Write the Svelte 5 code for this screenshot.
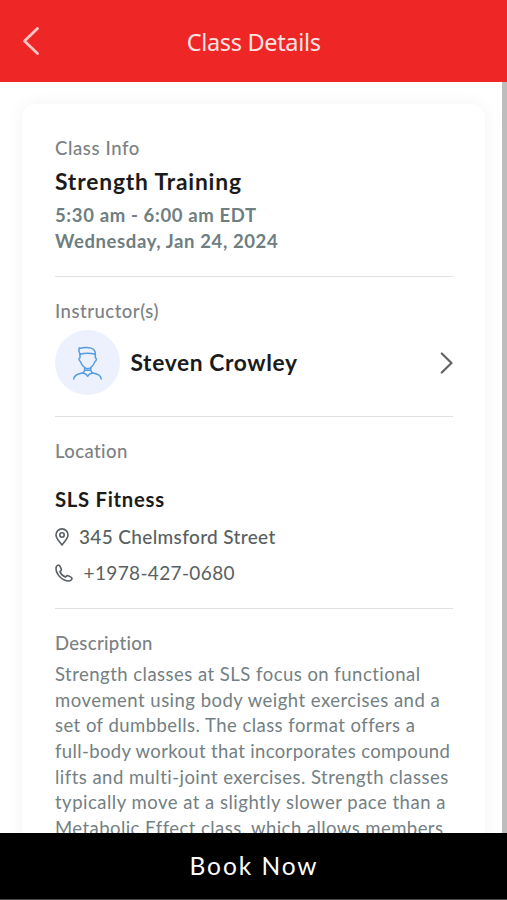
<script>
  const description = [
    { text: 'Strength classes at SLS focus on functional', spacing: 0.472 },
    { text: 'movement using body weight exercises and a', spacing: 0.477 },
    { text: 'set of dumbbells. The class format offers a', spacing: 0.45 },
    { text: 'full-body workout that incorporates compound', spacing: 0.355 },
    { text: 'lifts and multi-joint exercises. Strength classes', spacing: 0.462 },
    { text: 'typically move at a slightly slower pace than a', spacing: 0.492 },
    { text: 'Metabolic Effect class, which allows members', spacing: 0.436 }
  ];
</script>

<div class="screen">
  <header>
    <svg class="back" viewBox="0 0 20 30" fill="none"><path d="M16.500 2.500 3.500 15l13 12.500" /></svg>
    <h1>Class Details</h1>
  </header>

  <main>
    <div class="card">
      <section class="info">
        <div class="label" style="letter-spacing: 0.612px">Class Info</div>
        <h2>Strength Training</h2>
        <div class="when" style="letter-spacing: 0.64px">5:30 am - 6:00 am EDT</div>
        <div class="when" style="letter-spacing: 0.61px">Wednesday, Jan 24, 2024</div>
      </section>

      <section class="instructors">
        <div class="label" style="letter-spacing: 0.501px">Instructor(s)</div>
        <div class="person">
          <span class="avatar">
            <svg viewBox="0 0 44 48" fill="none">
              <path d="M14 15.200c-1.100-2.100-1.500-4.200-.9-6.200 1.300.7 2.200.1 3.600-.2 4.800-.8 13.100-.4 12.600 6.400" />
              <path d="M14 15.200c4.500-1.300 10.500-1.300 15.300 0" />
              <path d="M14 15.200v3.600c-1.500.3-1.200 3.100.4 3.600.9 3.300 4.300 7.300 7.300 7.300s6.400-4 7.300-7.300c1.600-.5 1.900-3.300.3-3.600v-3.600" />
              <path d="M18.600 29v2.300l-1.400 3 2.600.6 1.900 2.300 1.900-2.300 2.600-.6-1.400-3V29M18.600 31.300h6.200" />
              <path d="M17 33.800c-5 1.300-8.800 2-9.300 6.200M26.400 33.800c5 1.300 8.300 2 8.800 6.200" />
            </svg>
          </span>
          <h3>Steven Crowley</h3>
          <svg class="chevron" viewBox="0 0 13 22" fill="none"><path d="m1.800 1.500 9.700 9.500-9.700 9.500" /></svg>
        </div>
      </section>

      <section class="location">
        <div class="label" style="letter-spacing: 0.392px">Location</div>
        <h4>SLS Fitness</h4>
        <div class="row address">
          <svg class="pin" viewBox="0 0 14 18" fill="none">
            <path d="M7 17C4.500 13.800 1 10.200 1 6.900a6 6 0 0 1 12 0C13 10.200 9.500 13.800 7 17Z" />
            <circle cx="7" cy="7" r="2.200" />
          </svg>
          <span>345 Chelmsford Street</span>
        </div>
        <div class="row phone">
          <svg class="tel" viewBox="0 0 18 18" fill="none">
            <path d="M1 4.200C1 2.600 2.400 1.100 3.600 1c.7 0 1 .5 1.300 1.100l1.300 2.700c.3.700.2 1.300-.3 1.800l-1 1c.8 2.400 3.100 4.700 5.500 5.500l1-1c.5-.5 1.100-.6 1.800-.3l2.700 1.300c.6.300 1.100.6 1.100 1.300-.1 1.200-1.600 2.600-3.200 2.600C7.500 17 1 10.500 1 4.200Z" />
          </svg>
          <span>+1978-427-0680</span>
        </div>
      </section>

      <section class="about">
        <div class="label" style="letter-spacing: 0.315px">Description</div>
        <div class="copy">
          {#each description as line}
            <div style="letter-spacing: {line.spacing}px">{line.text}</div>
          {/each}
        </div>
      </section>
    </div>
    <div class="scrollbar"></div>
  </main>

  <button>Book Now</button>
</div>

<style>
  .screen {
    width: 507px;
    height: 900px;
    display: flex;
    flex-direction: column;
    overflow: hidden;
    background: #fff;
    font-family: Lato, 'Liberation Sans', sans-serif;
  }
  h1, h2, h3, h4 { margin: 0; }
  svg { display: block; flex: none; }

  header {
    flex: none;
    box-sizing: border-box;
    height: 81.5px;
    padding: 0 0 0 21px;
    display: flex;
    align-items: center;
    background: #ee2626;
  }
  .back { width: 20px; height: 30px; margin-top: 1px; stroke: #fcc4c4; stroke-width: 2.8; stroke-linecap: round; stroke-linejoin: round; }
  h1 {
    margin: 3px 0 0 145.7px;
    font: 400 23.5px/32px 'Noto Sans', sans-serif;
    letter-spacing: -0.33px;
    color: #ffe3e3;
  }

  main { flex: 1; min-height: 0; display: flex; justify-content: space-between; overflow: hidden; }
  .card {
    box-sizing: border-box;
    width: 463px;
    height: 850px;
    margin: 22.5px 0 0 22px;
    padding: 31px 32.5px 0 33px;
    border-radius: 14px;
    background: #fff;
    box-shadow: 0 0 18px rgba(0, 0, 0, 0.05);
  }
  .scrollbar { width: 5px; background: #bdbdbd; }

  section { box-sizing: border-box; border-bottom: 1.5px solid #e0e1e2; }
  .label { font-size: 18.5px; font-weight: 500; line-height: 26px; color: #7b8184; white-space: nowrap; }

  .info { height: 142px; }
  h2 { margin: 5px 0 7px; font-size: 22.8px; line-height: 30px; letter-spacing: 0.84px; color: #1b1b1b; }
  .when { font-size: 18.5px; font-weight: 700; line-height: 25.67px; color: #6e7e81; white-space: nowrap; }

  .instructors { height: 140px; padding-top: 21px; }
  .person { display: flex; align-items: center; margin-top: 6px; }
  .avatar { width: 65px; height: 65px; display: grid; place-items: center; border-radius: 50%; background: #edf1fd; }
  .avatar svg { width: 44px; height: 48px; stroke: #539ce2; stroke-width: 1.5; stroke-linecap: round; stroke-linejoin: round; }
  h3 { margin: -2px 0 0 10.5px; font-size: 22.8px; line-height: 30px; letter-spacing: 0.62px; color: #1b1b1b; }
  .chevron { width: 13px; height: 22px; margin-left: auto; stroke: #606366; stroke-width: 2.2; stroke-linecap: round; stroke-linejoin: round; }

  .location { height: 192px; padding-top: 21px; }
  h4 { margin-top: 21px; font-size: 20.3px; line-height: 28px; letter-spacing: 0.71px; color: #1b1b1b; }
  .row { display: flex; align-items: center; height: 26px; font-size: 19px; line-height: 26px; color: #595f62; white-space: nowrap; }
  .row svg { stroke: #595f62; stroke-width: 1.6; stroke-linejoin: round; }
  .address { margin-top: 11px; font-weight: 500; letter-spacing: 0.35px; }
  .phone { margin-top: 10px; letter-spacing: 0.359px; }
  .pin { width: 14px; height: 18px; margin-right: 10px; }
  .tel { width: 18px; height: 18px; margin-right: 10.5px; }

  .about { padding-top: 21px; border: 0; }
  .copy { margin-top: 6px; font-size: 18.5px; line-height: 25.67px; color: #738083; white-space: nowrap; }

  button {
    flex: none;
    height: 67.5px;
    padding: 0 0 0 1px;
    border: 0;
    border-bottom: 1px solid #4a4a4a;
    background: #000;
    color: #fff;
    font: 400 24.5px/30px Lato, 'Liberation Sans', sans-serif;
    letter-spacing: 1.97px;
  }
</style>
